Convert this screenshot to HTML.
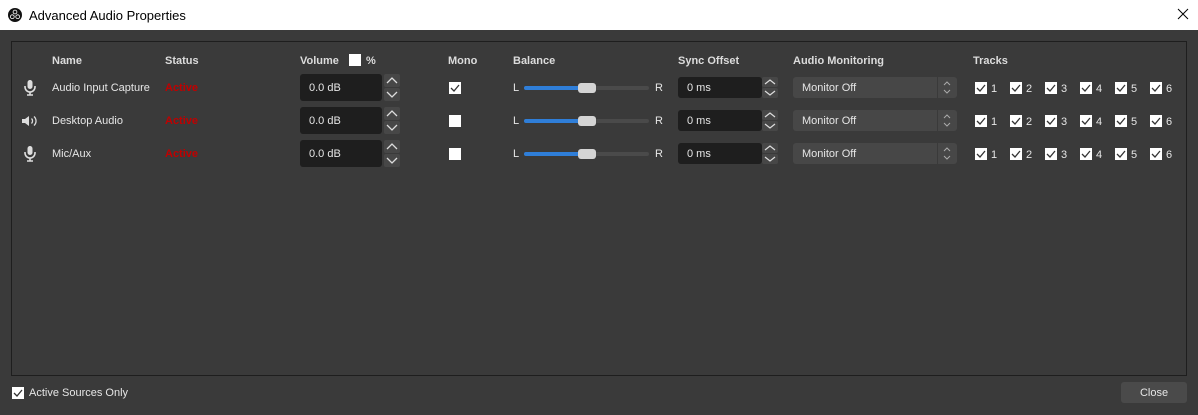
<!DOCTYPE html>
<html><head><meta charset="utf-8"><style>
*{margin:0;padding:0;box-sizing:border-box}
body{width:1198px;height:415px;background:#3a3a3a;font-family:"Liberation Sans",sans-serif;font-size:11px;color:#e6e6e6;position:relative;overflow:hidden}
.a{position:absolute}
#title{left:0;top:0;width:1198px;height:30px;background:#fff;color:#000;font-size:13px}
#panel{left:11px;top:41px;width:1176px;height:335px;border:1px solid #1e1e1e}
.h{font-weight:bold;color:#dcdcdc;top:55px;font-size:11px}
.t{line-height:14px}
.red{color:#c00000;font-weight:bold}
.box{background:#1e1e1e;border-radius:3px;color:#e6e6e6;padding-left:9px;padding-top:2px}
.sp{background:#474747;border-radius:2px;width:16px}
.cb{width:12px;height:12px;background:#fff}
.mon{background:#474747;border-radius:3px;width:164px;height:21px;padding-left:9px;line-height:23px}
</style></head><body>
<div class="a" id="title">
<svg class="a" style="left:8px;top:8px" width="14" height="14" viewBox="0 0 14 14"><circle cx="7" cy="7" r="7" fill="#111"/><circle cx="7" cy="4" r="2.3" fill="#fff"/><circle cx="4.3" cy="8.7" r="2.3" fill="#fff"/><circle cx="9.7" cy="8.7" r="2.3" fill="#fff"/><circle cx="7" cy="4" r="1.5" fill="#111"/><circle cx="4.3" cy="8.7" r="1.5" fill="#111"/><circle cx="9.7" cy="8.7" r="1.5" fill="#111"/></svg>
<div class="a" style="left:29px;top:8px">Advanced Audio Properties</div>
<svg class="a" style="left:1177px;top:8px" width="12" height="12"><path d="M1 1L11 11M11 1L1 11" stroke="#000" stroke-width="1"/></svg>
</div>
<div class="a" id="panel"></div>

<div class="a h" style="left:52px">Name</div>
<div class="a h" style="left:165px">Status</div>
<div class="a h" style="left:300px">Volume</div>
<div class="a cb" style="left:349px;top:54px"></div>
<div class="a h" style="left:366px">%</div>
<div class="a h" style="left:448px">Mono</div>
<div class="a h" style="left:513px">Balance</div>
<div class="a h" style="left:678px">Sync Offset</div>
<div class="a h" style="left:793px">Audio Monitoring</div>
<div class="a h" style="left:973px">Tracks</div>

<!-- Row 1 -->
<svg class="a" style="left:23px;top:80px" width="14" height="16" viewBox="0 0 14 16"><rect x="4.5" y="0" width="5" height="9" rx="2.5" fill="#ddd"/><path d="M2 6v1a5 5 0 0 0 10 0V6" stroke="#ddd" stroke-width="1.6" fill="none"/><path d="M7 12v3M4 15h6" stroke="#ddd" stroke-width="1.6"/></svg>
<div class="a t" style="left:52px;top:81px">Audio Input Capture</div>
<div class="a t red" style="left:165px;top:81px">Active</div>
<div class="a box" style="left:300px;top:74px;width:82px;height:27px;line-height:25px">0.0 dB</div>
<div class="a sp" style="left:384px;top:74px;height:13px"></div><div class="a sp" style="left:384px;top:88px;height:13px"></div>
<svg class="a" style="left:384px;top:74px" width="16" height="27"><path d="M3 9l5-5 5 5M3 18l5 5 5-5" stroke="#ddd" stroke-width="1.3" fill="none"/></svg>
<div class="a cb" style="left:449px;top:82px"></div>
<svg class="a" style="left:449px;top:82px" width="12" height="12"><path d="M2 6l3 3 5-6" stroke="#333" stroke-width="1.3" fill="none"/></svg>
<div class="a t" style="left:513px;top:81px">L</div><div class="a t" style="left:655px;top:81px">R</div>
<div class="a" style="left:524px;top:86px;width:125px;height:4px;background:#4a4a4a;border-radius:2px"></div>
<div class="a" style="left:524px;top:86px;width:56px;height:4px;background:#2f7ed8;border-radius:2px"></div>
<div class="a" style="left:578px;top:83px;width:18px;height:10px;background:#d4d4d4;border-radius:3px"></div>
<div class="a box" style="left:678px;top:77px;width:84px;height:21px;line-height:19px">0 ms</div>
<div class="a sp" style="left:762px;top:77px;height:10px"></div><div class="a sp" style="left:762px;top:88px;height:10px"></div>
<svg class="a" style="left:762px;top:77px" width="16" height="21"><path d="M3 7l5-4 5 4M3 14l5 4 5-4" stroke="#ddd" stroke-width="1.2" fill="none"/></svg>
<div class="a mon" style="left:793px;top:77px">Monitor Off</div>
<div class="a" style="left:937px;top:77px;width:1px;height:21px;background:#3a3a3a"></div>
<svg class="a" style="left:942px;top:80px" width="10" height="15"><path d="M2 5l3-3 3 3M2 10l3 3 3-3" stroke="#aaa" stroke-width="1" fill="none"/></svg>

<!-- Row 2 -->
<svg class="a" style="left:21px;top:114px" width="18" height="14" viewBox="0 0 18 14"><path d="M1 5h3l4-3v10l-4-3H1z" fill="#ddd"/><path d="M10.5 4.5a3.5 3.5 0 0 1 0 5M13 2.5a6 6 0 0 1 0 9" stroke="#ddd" stroke-width="1.3" fill="none"/></svg>
<div class="a t" style="left:52px;top:114px">Desktop Audio</div>
<div class="a t red" style="left:165px;top:114px">Active</div>
<div class="a box" style="left:300px;top:107px;width:82px;height:27px;line-height:25px">0.0 dB</div>
<div class="a sp" style="left:384px;top:107px;height:13px"></div><div class="a sp" style="left:384px;top:121px;height:13px"></div>
<svg class="a" style="left:384px;top:107px" width="16" height="27"><path d="M3 9l5-5 5 5M3 18l5 5 5-5" stroke="#ddd" stroke-width="1.3" fill="none"/></svg>
<div class="a cb" style="left:449px;top:115px"></div>
<div class="a t" style="left:513px;top:114px">L</div><div class="a t" style="left:655px;top:114px">R</div>
<div class="a" style="left:524px;top:119px;width:125px;height:4px;background:#4a4a4a;border-radius:2px"></div>
<div class="a" style="left:524px;top:119px;width:56px;height:4px;background:#2f7ed8;border-radius:2px"></div>
<div class="a" style="left:578px;top:116px;width:18px;height:10px;background:#d4d4d4;border-radius:3px"></div>
<div class="a box" style="left:678px;top:110px;width:84px;height:21px;line-height:19px">0 ms</div>
<div class="a sp" style="left:762px;top:110px;height:10px"></div><div class="a sp" style="left:762px;top:121px;height:10px"></div>
<svg class="a" style="left:762px;top:110px" width="16" height="21"><path d="M3 7l5-4 5 4M3 14l5 4 5-4" stroke="#ddd" stroke-width="1.2" fill="none"/></svg>
<div class="a mon" style="left:793px;top:110px">Monitor Off</div>
<div class="a" style="left:937px;top:110px;width:1px;height:21px;background:#3a3a3a"></div>
<svg class="a" style="left:942px;top:113px" width="10" height="15"><path d="M2 5l3-3 3 3M2 10l3 3 3-3" stroke="#aaa" stroke-width="1" fill="none"/></svg>

<!-- Row 3 -->
<svg class="a" style="left:23px;top:146px" width="14" height="16" viewBox="0 0 14 16"><rect x="4.5" y="0" width="5" height="9" rx="2.5" fill="#ddd"/><path d="M2 6v1a5 5 0 0 0 10 0V6" stroke="#ddd" stroke-width="1.6" fill="none"/><path d="M7 12v3M4 15h6" stroke="#ddd" stroke-width="1.6"/></svg>
<div class="a t" style="left:52px;top:147px">Mic/Aux</div>
<div class="a t red" style="left:165px;top:147px">Active</div>
<div class="a box" style="left:300px;top:140px;width:82px;height:27px;line-height:25px">0.0 dB</div>
<div class="a sp" style="left:384px;top:140px;height:13px"></div><div class="a sp" style="left:384px;top:154px;height:13px"></div>
<svg class="a" style="left:384px;top:140px" width="16" height="27"><path d="M3 9l5-5 5 5M3 18l5 5 5-5" stroke="#ddd" stroke-width="1.3" fill="none"/></svg>
<div class="a cb" style="left:449px;top:148px"></div>
<div class="a t" style="left:513px;top:147px">L</div><div class="a t" style="left:655px;top:147px">R</div>
<div class="a" style="left:524px;top:152px;width:125px;height:4px;background:#4a4a4a;border-radius:2px"></div>
<div class="a" style="left:524px;top:152px;width:56px;height:4px;background:#2f7ed8;border-radius:2px"></div>
<div class="a" style="left:578px;top:149px;width:18px;height:10px;background:#d4d4d4;border-radius:3px"></div>
<div class="a box" style="left:678px;top:143px;width:84px;height:21px;line-height:19px">0 ms</div>
<div class="a sp" style="left:762px;top:143px;height:10px"></div><div class="a sp" style="left:762px;top:154px;height:10px"></div>
<svg class="a" style="left:762px;top:143px" width="16" height="21"><path d="M3 7l5-4 5 4M3 14l5 4 5-4" stroke="#ddd" stroke-width="1.2" fill="none"/></svg>
<div class="a mon" style="left:793px;top:143px">Monitor Off</div>
<div class="a" style="left:937px;top:143px;width:1px;height:21px;background:#3a3a3a"></div>
<svg class="a" style="left:942px;top:146px" width="10" height="15"><path d="M2 5l3-3 3 3M2 10l3 3 3-3" stroke="#aaa" stroke-width="1" fill="none"/></svg>

<!-- Tracks -->
<svg class="a" style="left:0;top:0" width="1198" height="170">
<defs><g id="tc"><rect width="12" height="12" fill="#fff"/><path d="M2 6l3 3 5-6" stroke="#333" stroke-width="1.3" fill="none"/></g></defs>
<use href="#tc" x="975" y="82"/><use href="#tc" x="1010" y="82"/><use href="#tc" x="1045" y="82"/><use href="#tc" x="1080" y="82"/><use href="#tc" x="1115" y="82"/><use href="#tc" x="1150" y="82"/>
<use href="#tc" x="975" y="115"/><use href="#tc" x="1010" y="115"/><use href="#tc" x="1045" y="115"/><use href="#tc" x="1080" y="115"/><use href="#tc" x="1115" y="115"/><use href="#tc" x="1150" y="115"/>
<use href="#tc" x="975" y="148"/><use href="#tc" x="1010" y="148"/><use href="#tc" x="1045" y="148"/><use href="#tc" x="1080" y="148"/><use href="#tc" x="1115" y="148"/><use href="#tc" x="1150" y="148"/>
<g font-family="Liberation Sans, sans-serif" font-size="11" fill="#e6e6e6">
<text x="991" y="92">1</text><text x="1026" y="92">2</text><text x="1061" y="92">3</text><text x="1096" y="92">4</text><text x="1131" y="92">5</text><text x="1166" y="92">6</text>
<text x="991" y="125">1</text><text x="1026" y="125">2</text><text x="1061" y="125">3</text><text x="1096" y="125">4</text><text x="1131" y="125">5</text><text x="1166" y="125">6</text>
<text x="991" y="158">1</text><text x="1026" y="158">2</text><text x="1061" y="158">3</text><text x="1096" y="158">4</text><text x="1131" y="158">5</text><text x="1166" y="158">6</text>
</g></svg>

<!-- footer -->
<div class="a cb" style="left:12px;top:387px"></div>
<svg class="a" style="left:12px;top:387px" width="12" height="12"><path d="M2 6l3 3 5-6" stroke="#333" stroke-width="1.3" fill="none"/></svg>
<div class="a t" style="left:29px;top:386px">Active Sources Only</div>
<div class="a" style="left:1121px;top:382px;width:66px;height:21px;background:#4a4a4a;border-radius:3px;text-align:center;line-height:23px">Close</div>
</body></html>
